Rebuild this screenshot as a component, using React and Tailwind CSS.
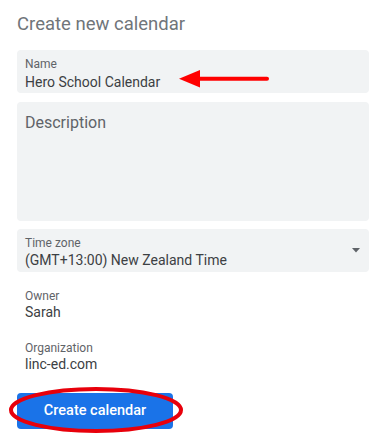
export default function App() {
  return (
    <div className="relative w-[388px] h-[442px] bg-white overflow-hidden" style={{ fontFamily: "Roboto, 'Liberation Sans', sans-serif" }}>
      <div className="pl-[17px] pr-[19px] pt-[10px] flex flex-col">
        <div className="text-[18.5px] leading-[28px] text-[#70757a]">Create new calendar</div>

        <div className="mt-[12px] h-[43px] rounded-[4px] bg-[#f1f3f4] pl-[8px] pt-[6px] flex flex-col">
          <div className="text-[12px] leading-[16px] text-[#5f6368]">Name</div>
          <div className="text-[14px] leading-[20px] text-[#3c4043]">Hero School Calendar</div>
        </div>

        <div className="mt-[9px] h-[119px] rounded-[4px] bg-[#f1f3f4] pl-[8px] pt-[9px]">
          <div className="text-[16px] leading-[24px] text-[#5f6368]">Description</div>
        </div>

        <div className="mt-[8px] h-[43px] rounded-[4px] bg-[#f1f3f4] pl-[8px] pt-[6px] pr-[9px] flex items-center">
          <div className="flex-1 flex flex-col self-start">
            <div className="text-[12px] leading-[16px] text-[#5f6368]">Time zone</div>
            <div className="text-[14px] leading-[18px] text-[#3c4043]">(GMT+13:00) New Zealand Time</div>
          </div>
          <svg width="8" height="5" viewBox="0 0 8 5" className="mb-[6px]"><path d="M0 0 L8 0 L4 4.5 Z" fill="#5f6368" /></svg>
        </div>

        <div className="mt-[16px] pl-[8px] flex flex-col">
          <div className="text-[12px] leading-[16px] text-[#5f6368]">Owner</div>
          <div className="text-[14px] leading-[16px] text-[#3c4043]">Sarah</div>
        </div>

        <div className="mt-[20px] pl-[8px] flex flex-col">
          <div className="text-[12px] leading-[16px] text-[#5f6368]">Organization</div>
          <div className="text-[14px] leading-[16px] text-[#3c4043]">linc-ed.com</div>
        </div>

        <div className="mt-[21px]">
          <button className="w-[156px] h-[36px] rounded-[4px] bg-[#1a73e8] text-white text-[14.5px] font-medium flex items-center justify-center">Create calendar</button>
        </div>
      </div>

      <svg className="absolute left-0 top-0 pointer-events-none" width="388" height="442" viewBox="0 0 388 442">
        <line x1="197" y1="78.7" x2="267" y2="78.7" stroke="#ff0000" strokeWidth="4" strokeLinecap="round" />
        <path d="M179 78.7 L200 70 L200 87.4 Z" fill="#ff0000" />
        <ellipse cx="96" cy="410" rx="85" ry="21" fill="none" stroke="#e8000b" strokeWidth="4" />
      </svg>
    </div>
  );
}
